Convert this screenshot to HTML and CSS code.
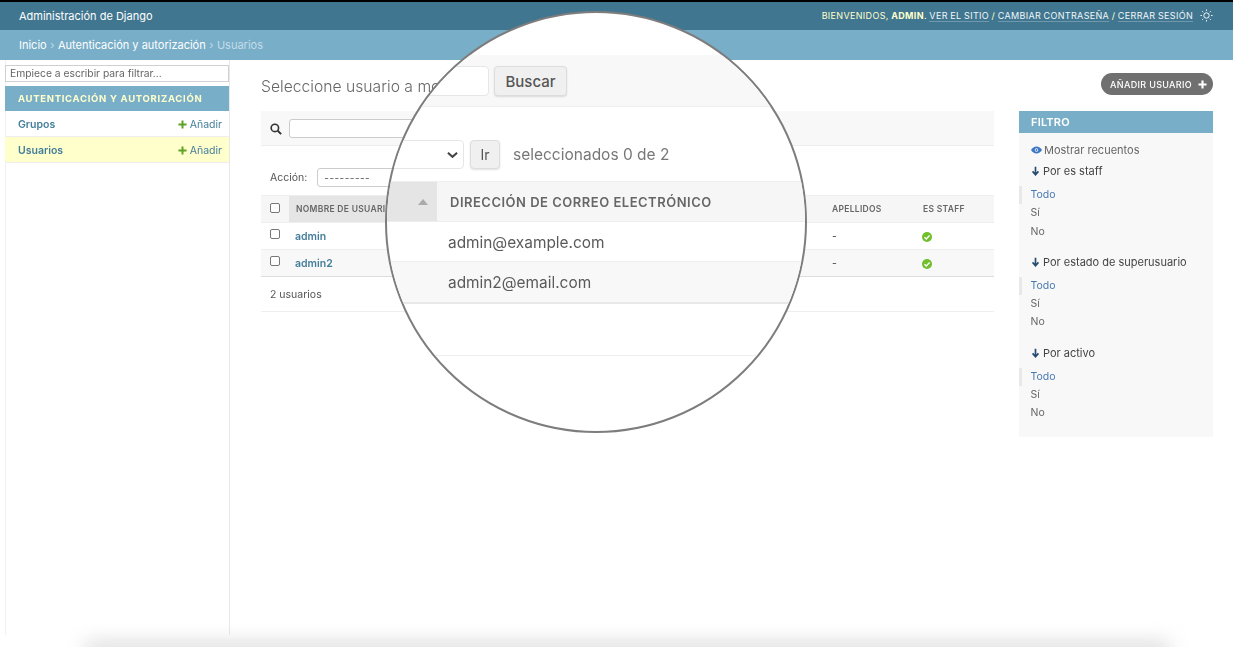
FILE: index.html
```html
<!DOCTYPE html>
<html lang="es">
<head>
<meta charset="utf-8">
<title>Seleccione usuario a modificar</title>
<link rel="stylesheet" href="styles.css">
</head>
<body>
<div class="page">
  <header class="header">
    <div class="brand">Administración de Django</div>
    <div class="tools">
      <div class="tools-text">Bienvenidos, <strong>admin</strong>. <a href="#">Ver el sitio</a> / <a href="#">Cambiar contraseña</a> / <a href="#">Cerrar sesión</a></div>
      <svg class="sun" viewBox="0 0 14 14" width="13" height="13"><circle cx="7" cy="7" r="2.9" fill="none" stroke="#fff" stroke-width="1"/><path d="M7 0.5v1.6M7 11.9v1.6M0.5 7h1.6M11.9 7h1.6M2.4 2.4l1.1 1.1M10.5 10.5l1.1 1.1M2.4 11.600l1.1-1.1M10.5 3.5l1.1-1.1" stroke="#fff" stroke-width="1"/></svg>
    </div>
  </header>
  <nav class="crumbs"><a href="#">Inicio</a><i>›</i><a href="#">Autenticación y autorización</a><i>›</i><span>Usuarios</span></nav>
  <div class="body">
    <aside class="side">
      <input class="side-filter" placeholder="Empiece a escribir para filtrar...">
      <div class="caption">Autenticación y autorización</div>
      <div class="mod"><a href="#">Grupos</a><span class="add"><svg class="plus" viewBox="0 0 10 10" width="9" height="9"><path d="M5 .5v9M.5 5h9" stroke="#5fa225" stroke-width="2.2"/></svg>Añadir</span></div>
      <div class="mod current"><a href="#">Usuarios</a><span class="add"><svg class="plus" viewBox="0 0 10 10" width="9" height="9"><path d="M5 .5v9M.5 5h9" stroke="#5fa225" stroke-width="2.2"/></svg>Añadir</span></div>
    </aside>
    <main class="main">
      <div class="title-row">
        <h1>Seleccione usuario a modificar</h1>
        <a class="addbtn" href="#">Añadir usuario<svg viewBox="0 0 10 10" width="9" height="9"><path d="M5 .5v9M.5 5h9" stroke="#fff" stroke-width="2.4"/></svg></a>
      </div>
      <div class="columns">
        <section class="list">
          <div class="toolbar">
            <svg viewBox="0 0 14 14" width="12" height="12"><circle cx="5.7" cy="5.7" r="4.3" fill="none" stroke="#333" stroke-width="1.9"/><path d="M9 9l4 4" stroke="#333" stroke-width="2.2"/></svg>
            <input class="search" type="text">
          </div>
          <div class="actions"><label>Acción:</label><div class="fake-select">---------</div></div>
          <table class="grid">
            <thead><tr>
              <th class="c-box"><span class="box"></span></th>
              <th class="c-user">Nombre de usuario</th>
              <th class="c-mail"></th>
              <th class="c-name"></th>
              <th class="c-last">Apellidos</th>
              <th class="c-staff">Es staff</th>
            </tr></thead>
            <tbody>
              <tr>
                <td class="c-box"><span class="box"></span></td><td class="c-user"><a href="#">admin</a></td><td></td><td></td><td>-</td>
                <td><svg class="yes" viewBox="0 0 12 12" width="10" height="10"><circle cx="6" cy="6" r="6" fill="#70bf2b"/><path d="M3 6.2l2.1 2.1L9.1 4.2" fill="none" stroke="#fff" stroke-width="1.7"/></svg></td>
              </tr>
              <tr class="alt">
                <td class="c-box"><span class="box"></span></td><td class="c-user"><a href="#">admin2</a></td><td></td><td></td><td>-</td>
                <td><svg class="yes" viewBox="0 0 12 12" width="10" height="10"><circle cx="6" cy="6" r="6" fill="#70bf2b"/><path d="M3 6.2l2.1 2.1L9.1 4.2" fill="none" stroke="#fff" stroke-width="1.7"/></svg></td>
              </tr>
            </tbody>
          </table>
          <p class="paginator">2 usuarios</p>
        </section>
        <aside class="filter">
          <h2>Filtro</h2>
          <p class="counts"><svg viewBox="0 0 16 10" width="11" height="8"><path d="M0 5c2-3.2 4.8-5 8-5s6 1.8 8 5c-2 3.2-4.8 5-8 5S2 8.200 0 5z" fill="#3a76c4"/><circle cx="8" cy="5" r="2.600" fill="#fff"/><circle cx="8" cy="5" r="1.500" fill="#3a76c4"/></svg>Mostrar recuentos</p>
          <div class="group">
            <h3><svg viewBox="0 0 10 12" width="9" height="10"><path d="M5 1v9M1.500 6.500L5 10.500l3.500-4" fill="none" stroke="#264b6e" stroke-width="2"/></svg>Por es staff</h3>
            <ul><li class="sel">Todo</li><li>Sí</li><li>No</li></ul>
          </div>
          <div class="group">
            <h3><svg viewBox="0 0 10 12" width="9" height="10"><path d="M5 1v9M1.500 6.500L5 10.500l3.500-4" fill="none" stroke="#264b6e" stroke-width="2"/></svg>Por estado de superusuario</h3>
            <ul><li class="sel">Todo</li><li>Sí</li><li>No</li></ul>
          </div>
          <div class="group">
            <h3><svg viewBox="0 0 10 12" width="9" height="10"><path d="M5 1v9M1.500 6.500L5 10.500l3.500-4" fill="none" stroke="#264b6e" stroke-width="2"/></svg>Por activo</h3>
            <ul><li class="sel">Todo</li><li>Sí</li><li>No</li></ul>
          </div>
        </aside>
      </div>
    </main>
  </div>
</div>

<div class="lens">
  <div class="lens-in">
    <div class="l-bar"><div class="l-search"></div><div class="l-btn l-buscar">Buscar</div></div>
    <div class="l-actions">
      <div class="l-select"><svg viewBox="0 0 12 8" width="11" height="8"><path d="M1 1.500l5 4.500 5-4.500" fill="none" stroke="#444" stroke-width="2.200"/></svg></div>
      <div class="l-btn l-ir">Ir</div>
      <span class="l-count">seleccionados 0 de 2</span>
    </div>
    <div class="l-head">
      <div class="l-sorted"><svg viewBox="0 0 10 6" width="10" height="6"><path d="M0 6l5-6 5 6z" fill="#aaa"/></svg></div>
      <div class="l-th">Dirección de correo electrónico</div>
    </div>
    <div class="l-row">admin@example.com</div>
    <div class="l-row l-alt">admin2@email.com</div>
    <div class="l-foot"></div>
  </div>
</div>
<div class="edge-shadow"></div>
</body>
</html>
```
FILE: styles.css
```css
* { box-sizing: border-box; }
html, body { margin: 0; padding: 0; }
body {
  position: relative;
  width: 1233px;
  height: 647px;
  overflow: hidden;
  background: #fff;
  font-family: Inter, "Liberation Sans", sans-serif;
  color: #333;
}
a { text-decoration: none; color: inherit; }

.page {
  display: flex;
  flex-direction: column;
  height: 635px;
  filter: blur(.4px);
}

.header {
  display: flex;
  justify-content: space-between;
  align-items: center;
  height: 30px;
  border-top: 2px solid #000;
  background: #417690;
  padding: 0 20px 0 19px;
  color: #fff;
}
.brand { font-size: 11px; }
.tools {
  display: flex;
  align-items: center;
  gap: 7px;
  margin-top: -1px;
}
.tools-text {
  font-size: 9px;
  letter-spacing: .33px;
  word-spacing: -.3px;
  text-transform: uppercase;
  color: #ffc;
  white-space: pre;
}
.tools-text strong { font-weight: 700; }
.tools-text a { color: #f0f6f9; border-bottom: 1px solid rgba(255,255,255,.25); }

.crumbs {
  display: flex;
  align-items: center;
  gap: 3.500px;
  height: 30px;
  background: #79aec8;
  padding: 0 19px;
  font-size: 11px;
  color: #fff;
}
.crumbs i { font-style: normal; color: #c4dce8; }
.crumbs span { color: #c4dce8; }

.body { display: flex; flex: 1; min-height: 0; }

.side {
  width: 225px;
  margin-left: 5px;
  border-left: 1px solid #f0f0f0;
  border-right: 1px solid #e8e8e8;
  padding-top: 5px;
}
.side-filter {
  display: block;
  width: 224px;
  height: 17px;
  margin-left: -1px;
  padding: 0 4px 1px;
  border: 1px solid #d0d0d0;
  background: #fff;
  font: 10.300px Inter, "Liberation Sans", sans-serif;
}
.side-filter::placeholder { color: #666; opacity: 1; }
.caption {
  margin: 4px 0 0 -1px;
  width: 224px;
  height: 25px;
  line-height: 25px;
  padding-left: 13px;
  background: #79aec8;
  color: #ffc;
  font-size: 9.500px;
  font-weight: 700;
  letter-spacing: .7px;
  text-transform: uppercase;
}
.mod {
  display: flex;
  justify-content: space-between;
  align-items: center;
  margin-left: -1px;
  width: 224px;
  height: 26px;
  padding: 1px 7px 0 13px;
  border-bottom: 1px solid #eee;
  font-size: 10.500px;
}
.mod a { color: #447e9b; font-weight: 600; }
.mod.current { background: #ffc; }
.add { display: flex; align-items: center; gap: 3px; color: #447e9b; }

.main { flex: 1; padding: 0 20px 0 31px; min-width: 0; }
.title-row {
  display: flex;
  justify-content: space-between;
  align-items: center;
  height: 51px;
  padding-top: 2px;
}
h1 { margin: 0; font-size: 15.700px; font-weight: 300; color: #666; }
.addbtn {
  display: flex;
  align-items: center;
  gap: 6px;
  height: 22px;
  padding: 0 6px 0 9px;
  margin-top: -5px;
  border-radius: 11px;
  background: #707070;
  color: #fff;
  font-size: 9px;
  font-weight: 500;
  letter-spacing: .33px;
  text-transform: uppercase;
}

.columns { display: flex; justify-content: space-between; }
.list { width: 733px; }
.toolbar {
  display: flex;
  align-items: center;
  gap: 7px;
  height: 35px;
  padding: 2px 8px 0 9px;
  background: #f8f8f8;
  border-bottom: 1px solid #eee;
}
.search {
  width: 140px;
  height: 19px;
  margin-top: -2px;
  border: 1px solid #ccc;
  border-radius: 3px;
  background: #fff;
}
.actions {
  display: flex;
  align-items: center;
  gap: 10px;
  height: 49px;
  padding: 14px 0 0 9px;
  font-size: 10.500px;
  color: #555;
}
.fake-select {
  width: 130px;
  height: 19px;
  line-height: 18px;
  padding-left: 6px;
  border: 1px solid #ccc;
  border-radius: 3px;
  font-size: 10px;
  background: #fff;
  letter-spacing: .5px;
}

.grid {
  width: 100%;
  border-collapse: collapse;
  table-layout: fixed;
  font-size: 10.500px;
}
.grid th {
  height: 27px;
  padding: 0 7px;
  background: #f6f6f6;
  border-top: 1px solid #eee;
  border-bottom: 1px solid #eee;
  color: #666;
  font-size: 8.500px;
  font-weight: 600;
  letter-spacing: .3px;
  text-transform: uppercase;
  text-align: left;
  white-space: nowrap;
  overflow: hidden;
}
.grid th.c-user { background: #e5e5e5; }
.grid td {
  height: 27px;
  padding: 0 7px;
  border-bottom: 1px solid #eee;
  color: #444;
  vertical-align: middle;
}
.grid td.c-user { padding-left: 6px; }
.grid tr.alt td { background: #f8f8f8; border-bottom-color: #ddd; }
.grid td.c-user a { color: #447e9b; font-weight: 600; }
.c-box { width: 28px; }
.c-user { width: 140px; }
.c-mail { width: 260px; }
.c-name { width: 136px; }
.c-last { width: 91px; }
.box {
  display: block;
  width: 10px;
  height: 10px;
  margin: -1px 0 1px 2px;
  border: 1px solid #777;
  border-radius: 2px;
  background: #fff;
}
.grid td .box { margin: -2px 0 2px 2px; }
.yes { display: block; margin: 2px 0 0 -1px; }
.paginator {
  margin: 0;
  height: 35px;
  line-height: 35px;
  padding-left: 9px;
  border-bottom: 1px solid #eee;
  font-size: 10.500px;
  color: #555;
}

.filter {
  width: 194px;
  height: 326px;
  background: #f8f8f8;
}
.filter h2 {
  margin: 0;
  height: 22px;
  line-height: 22px;
  padding-left: 12px;
  background: #79aec8;
  color: #fff;
  font-size: 11px;
  font-weight: 600;
  letter-spacing: .2px;
  text-transform: uppercase;
}
.counts {
  display: flex;
  align-items: center;
  gap: 2px;
  margin: 0;
  padding: 10px 0 0 12px;
  font-size: 11px;
  line-height: 14px;
  color: #666;
}
.group h3 {
  display: flex;
  align-items: center;
  gap: 3px;
  margin: 0;
  padding-left: 12px;
  font-size: 11px;
  line-height: 14px;
  font-weight: 400;
  color: #444;
}
.counts + .group { margin-top: 7px; }
.group + .group { margin-top: 14px; }
.group ul { list-style: none; margin: 8px 0 0; padding: 0; }
.group li {
  height: 18.300px;
  line-height: 18.300px;
  padding-left: 11.500px;
  font-size: 10.500px;
  color: #666;
}
.group li.sel { color: #4679b0; box-shadow: inset 3px 0 0 #e8e8e8; }

/* Magnifier overlay */
.lens {
  position: absolute;
  left: 385px;
  top: 11px;
  width: 422px;
  height: 422px;
  border-radius: 50%;
  border: 2px solid #7d7d7d;
  background: #fff;
  overflow: hidden;
}
.lens-in {
  position: absolute;
  left: -2px;
  top: -2px;
  width: 422px;
  display: flex;
  flex-direction: column;
  padding-top: 44px;
  filter: blur(.7px);
}
.l-bar {
  display: flex;
  align-items: center;
  gap: 5px;
  height: 52px;
  background: #f8f8f8;
  border-bottom: 1px solid #eee;
}
.l-search {
  width: 104px;
  height: 30px;
  background: #fff;
  border: 1px solid #e6e6e6;
  border-radius: 4px;
}
.l-btn {
  display: flex;
  align-items: center;
  justify-content: center;
  height: 30px;
  border: 1px solid #ddd;
  border-radius: 4px;
  background: #f0f0f0;
  box-shadow: 0 1px 2px rgba(0,0,0,.12);
  color: #555;
  font-weight: 500;
}
.l-buscar { width: 73px; font-size: 15px; padding-top: 1px; }
.l-actions {
  display: flex;
  align-items: center;
  height: 29px;
  margin-top: 33px;
}
.l-select {
  display: flex;
  align-items: center;
  justify-content: flex-end;
  width: 79px;
  height: 29px;
  padding-right: 5px;
  border: 1px solid #e6e6e6;
  border-radius: 4px;
  background: #fff;
}
.l-ir { width: 30px; height: 29px; margin-left: 6px; font-size: 14px; font-weight: 400; }
.l-count { margin-left: 13px; font-size: 15.500px; color: #777; }
.l-head {
  display: flex;
  height: 41px;
  margin-top: 12px;
  background: #f6f6f6;
  border-top: 1px solid #eee;
  border-bottom: 1px solid #eee;
}
.l-sorted {
  display: flex;
  align-items: center;
  justify-content: flex-end;
  width: 52px;
  padding: 0 9px 0 0;
  background: #e5e5e5;
}
.l-th {
  align-self: center;
  padding: 1px 0 0 13px;
  font-size: 13px;
  font-weight: 600;
  letter-spacing: .5px;
  color: #666;
  text-transform: uppercase;
  white-space: nowrap;
}
.l-row {
  height: 40px;
  line-height: 42px;
  padding-left: 63px;
  font-size: 15.400px;
  color: #5a5a5a;
  border-bottom: 1px solid #eee;
}
.l-alt { background: #f8f8f8; height: 42px; line-height: 42px; border-bottom-color: #e8e8e8; border-bottom-width: 2px; }
.l-foot { height: 52px; border-bottom: 1px solid #eee; }

.edge-shadow {
  position: absolute;
  left: 85px;
  top: 643px;
  width: 1085px;
  height: 14px;
  background: #d4d4d4;
  filter: blur(10px);
}
```
